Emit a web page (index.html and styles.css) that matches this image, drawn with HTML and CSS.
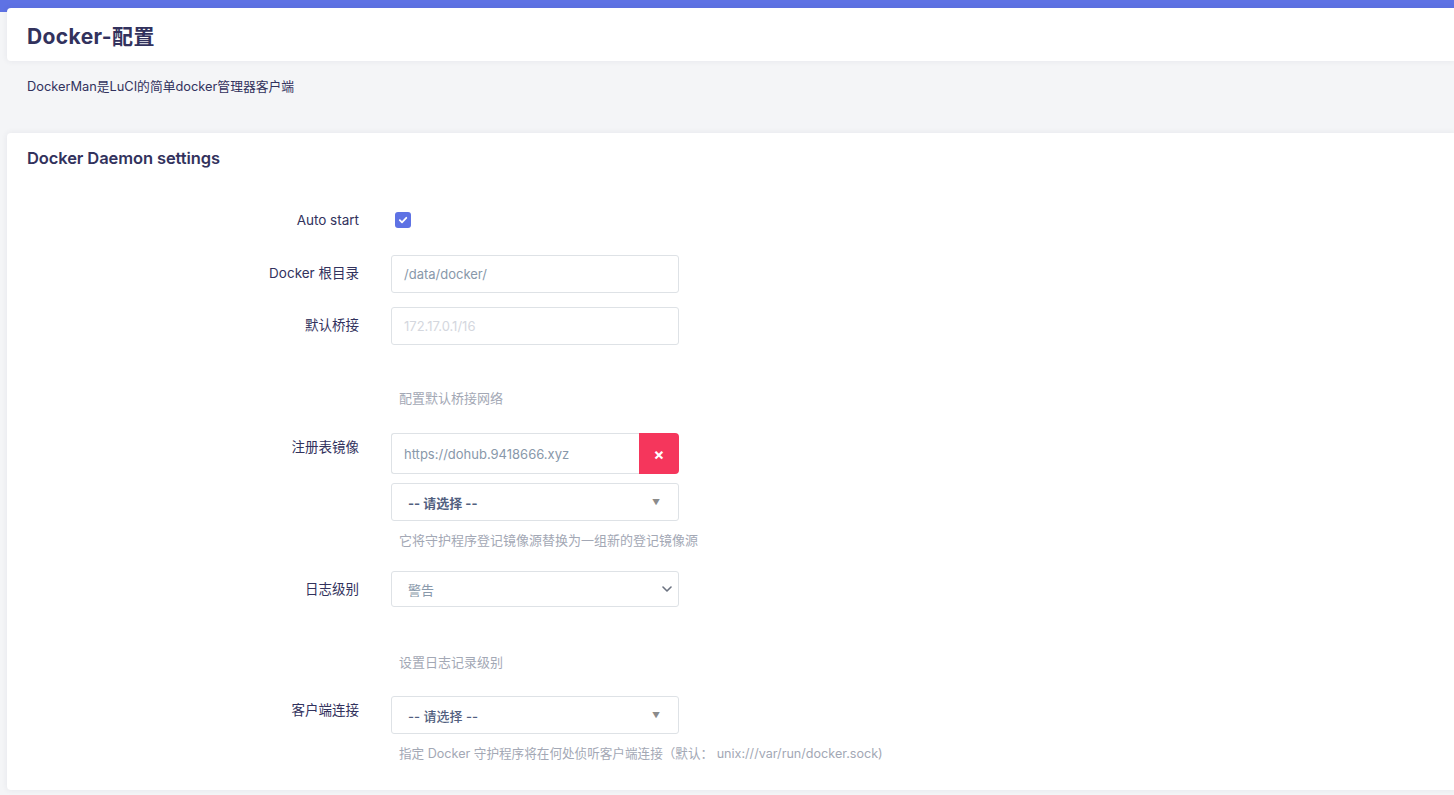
FILE: index.html
```html
<!DOCTYPE html>
<html lang="zh">
<head>
<meta charset="utf-8">
<title>Docker-配置</title>
<link rel="stylesheet" href="styles.css">
</head>
<body>
<div class="page">
  <header class="head-card">
    <h1 class="head-title">Docker-配置</h1>
  </header>
  <div class="intro">DockerMan是LuCI的简单docker管理器客户端</div>
  <section class="card">
    <h2 class="card-title">Docker Daemon settings</h2>

    <div class="row row-auto">
      <div class="label label-auto">Auto start</div>
      <div class="field">
        <span class="checkbox">
          <svg width="10" height="10" viewBox="0 0 10 10"><path d="M1.8 5.2 L4 7.3 L8.3 2.8" fill="none" stroke="#fff" stroke-width="1.8" stroke-linecap="round" stroke-linejoin="round"/></svg>
        </span>
      </div>
    </div>

    <div class="row row-root">
      <div class="label">Docker 根目录</div>
      <div class="field">
        <div class="input"><span class="val">/data/docker/</span></div>
      </div>
    </div>

    <div class="row row-bridge">
      <div class="label">默认桥接</div>
      <div class="field">
        <div class="input"><span class="ph">172.17.0.1/16</span></div>
        <div class="desc desc-bridge">配置默认桥接网络</div>
      </div>
    </div>

    <div class="row row-reg">
      <div class="label label-reg">注册表镜像</div>
      <div class="field">
        <div class="dyn">
          <div class="input input-dyn"><span class="val">https://dohub.9418666.xyz</span></div>
          <div class="btn-remove">×</div>
        </div>
        <div class="input select-combo"><span class="pick">-- 请选择 --</span><span class="tri">▼</span></div>
        <div class="desc desc-reg">它将守护程序登记镜像源替换为一组新的登记镜像源</div>
      </div>
    </div>

    <div class="row row-log">
      <div class="label">日志级别</div>
      <div class="field">
        <div class="input input-log"><span class="val">警告</span>
          <svg class="chev" width="10" height="6" viewBox="0 0 10 6"><path d="M1 1 L5 5 L9 1" fill="none" stroke="#6b7280" stroke-width="1.6" stroke-linecap="round" stroke-linejoin="round"/></svg>
        </div>
        <div class="desc desc-log">设置日志记录级别</div>
      </div>
    </div>

    <div class="row row-client">
      <div class="label label-client">客户端连接</div>
      <div class="field">
        <div class="input select-combo select-client"><span class="pick pick-light">-- 请选择 --</span><span class="tri">▼</span></div>
        <div class="desc desc-client">指定 Docker 守护程序将在何处侦听客户端连接（默认： unix:///var/run/docker.sock)</div>
      </div>
    </div>
  </section>
</div>
</body>
</html>
```

FILE: styles.css
```css
* { box-sizing: border-box; }
html, body {
  margin: 0;
  padding: 0;
  height: 100%;
}
body {
  background: linear-gradient(#5e72e4 0, #5e72e4 12px, #f4f5f7 12px);
  font-family: Inter, "Noto Sans CJK SC", sans-serif;
  color: #32325d;
  overflow: hidden;
}
.page {
  padding: 8px 0 0 7px;
}
.head-card {
  height: 53px;
  background: #fff;
  border-radius: 4px 0 0 4px;
  box-shadow: 0 0 6px rgba(50, 50, 93, 0.08);
  display: flex;
  align-items: center;
  padding: 0 20px;
}
.head-title {
  margin: 0;
  font-size: 21px;
  font-weight: 700;
  color: #32325d;
  letter-spacing: 0.4px;
}
.intro {
  height: 72px;
  padding: 18px 20px 0;
  font-size: 12.8px;
  line-height: 16px;
  color: #32325d;
}
.card {
  background: #fff;
  border-radius: 4px 0 0 4px;
  box-shadow: 0 0 6px rgba(50, 50, 93, 0.08);
  height: 657px;
  padding: 15px 20px 0;
}
.card-title {
  margin: 0;
  font-size: 16.5px;
  font-weight: 600;
  line-height: 20px;
  color: #32325d;
  letter-spacing: -0.1px;
}
.row {
  display: flex;
  align-items: flex-start;
}
.label {
  width: 332px;
  flex: none;
  text-align: right;
  font-size: 13.5px;
  line-height: 18px;
  padding-top: 9px;
  color: #32325d;
}
.field {
  margin-left: 32px;
  width: 288px;
  flex: none;
}
.row-auto { margin-top: 43px; }
.label-auto { padding-top: 0; }
.checkbox {
  display: flex;
  align-items: center;
  justify-content: center;
  width: 16px;
  height: 16px;
  margin: 1px 0 0 4px;
  background: #5e72e4;
  border-radius: 3px;
}
.row-root { margin-top: 26px; }
.row-bridge { margin-top: 14px; }
.row-reg { margin-top: 27px; }
.row-log { margin-top: 23px; }
.row-client { margin-top: 26px; }
.label-reg { padding-top: 5px; }
.label-client { padding-top: 5px; }

.input {
  height: 38px;
  border: 1px solid #dee2e6;
  border-radius: 3px;
  background: #fff;
  display: flex;
  align-items: center;
  padding: 0 12px;
  font-size: 13px;
}
.val { color: #8898aa; }
.ph { color: #d4d7de; }
.dyn {
  display: flex;
  height: 41px;
}
.input-dyn {
  height: 41px;
  flex: 1;
  border-radius: 3px 0 0 3px;
  border-right: none;
}
.btn-remove {
  width: 40px;
  height: 41px;
  background: #f5365c;
  border-radius: 0 4px 4px 0;
  color: #fff;
  font-size: 16px;
  font-weight: 700;
  display: flex;
  align-items: center;
  justify-content: center;
}
.select-combo {
  margin-top: 9px;
  justify-content: space-between;
  padding: 0 18px 0 16px;
}
.select-client { margin-top: 0; }
.pick {
  font-weight: 700;
  color: #525f7f;
}
.pick-light {
  font-weight: 500;
}
.tri {
  font-size: 8px;
  color: #8b8b8b;
}
.input-log {
  height: 36px;
  justify-content: space-between;
  padding: 0 4px 0 16px;
}
.chev { margin-right: 2px; }
.desc {
  font-size: 13px;
  line-height: 16px;
  color: #a3a8b5;
  padding-left: 8px;
  white-space: nowrap;
}
.desc-bridge { margin-top: 45px; }
.desc-reg { margin-top: 11px; }
.desc-log { margin-top: 47px; }
.desc-client { margin-top: 12px; font-size: 12.6px; }
```
